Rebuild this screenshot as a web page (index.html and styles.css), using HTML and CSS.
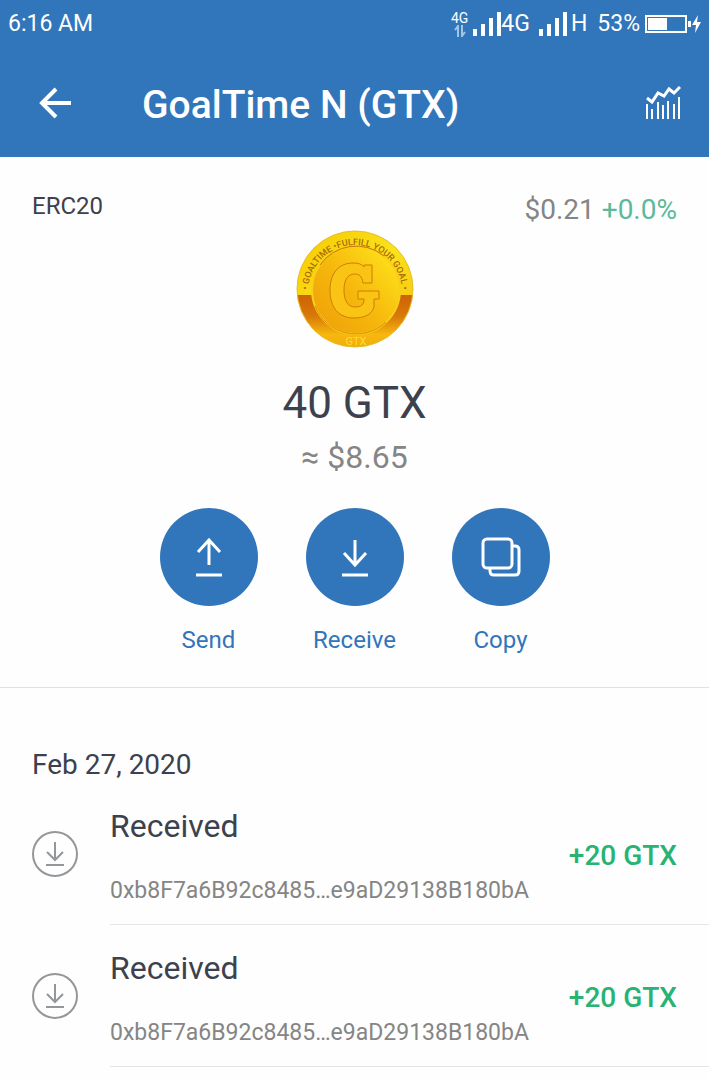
FILE: index.html
```html
<!DOCTYPE html>
<html lang="en">
<head>
    <meta charset="UTF-8">
    <meta name="viewport" content="width=device-width, initial-scale=1.0">
    <title>GoalTime N (GTX)</title>
    <link rel="stylesheet" href="styles.css">
</head>
<body>
    <header class="header">
        <div class="status-bar">
            <span>6:16 AM</span>
            <div class="status-icons">
                <div class="data">
                    <span class="data-label">4G</span>
                    <svg width="12" height="12" viewBox="0 0 12 12" fill="none" stroke="#a3c4e6" stroke-width="2">
                        <path d="M4 12V1L1 5M8 0v11l3-4"/>
                    </svg>
                </div>
                <svg width="29" height="24" viewBox="0 0 29 24" fill="#fff">
                    <path d="M1 17h4v7H1zM9 12h4v12H9zM17 6h4v18h-4zM25 0h4v24h-4z"/>
                </svg>
                <span>4G</span>
                <svg class="signal-two" width="29" height="24" viewBox="0 0 29 24" fill="#fff">
                    <path d="M1 17h4v7H1zM9 12h4v12H9zM17 6h4v18h-4zM25 0h4v24h-4z"/>
                </svg>
                <span class="network">H</span>
                <span class="percent">53%</span>
                <svg width="56" height="20" viewBox="0 0 56 20" fill="#fff">
                    <path d="M0 1h42v18H0zM2 3v14h38V3z" fill-rule="evenodd"/>
                    <path d="M3 4h19v12H3zM43 7h3v6h-3zM53 1l-6 10h4l-1 8 6-11h-4z"/>
                </svg>
            </div>
        </div>
        <nav class="nav-bar">
            <button class="icon-button" aria-label="Back">
                <svg width="34" height="32" viewBox="0 0 34 32" fill="none" stroke="#fff" stroke-width="4">
                    <path d="M33 16H4M18 2L4 16l14 14"/>
                </svg>
            </button>
            <h1>GoalTime N (GTX)</h1>
            <button class="icon-button" aria-label="Price chart">
                <svg width="36" height="34" viewBox="0 0 36 34" fill="none" stroke="#fff" stroke-width="3">
                    <path d="M2 12l5 4 6-9 6 3 5-7 5 4 6-6"/>
                    <path d="M2 18v15M7 23v10M13 16v17M18 19v14M23 15v18M29 18v15M34 11v22" stroke-width="2"/>
                </svg>
            </button>
        </nav>
    </header>

    <main>
        <section class="summary">
            <div class="token-info">
                <span class="token-type">ERC20</span>
                <span class="price">$0.21 <span class="change">+0.0%</span></span>
            </div>
            <svg class="coin" width="118" height="118" viewBox="0 0 118 118">
                <defs>
                    <linearGradient id="rim" x1="0" y1="0" x2="1" y2="1">
                        <stop offset="0" stop-color="#f5c800"/>
                        <stop offset="0.5" stop-color="#fbe21c"/>
                        <stop offset="1" stop-color="#f4bd08"/>
                    </linearGradient>
                    <linearGradient id="face" x1="0" y1="1" x2="1" y2="0.1">
                        <stop offset="0" stop-color="#ee9c08"/>
                        <stop offset="0.5" stop-color="#f6b80c"/>
                        <stop offset="1" stop-color="#ffe51c"/>
                    </linearGradient>
                    <linearGradient id="band" x1="0" y1="0" x2="0" y2="1">
                        <stop offset="0" stop-color="#cc6204"/>
                        <stop offset="0.4" stop-color="#d97908"/>
                        <stop offset="0.75" stop-color="#f7b80e"/>
                        <stop offset="1" stop-color="#f0ac0a"/>
                    </linearGradient>
                    <clipPath id="disc">
                        <circle cx="59" cy="59" r="58"/>
                    </clipPath>
                    <path id="arc" d="M12 62A47 47 0 1 1 106 62"/>
                </defs>
                <circle cx="59" cy="59" r="58" fill="url(#rim)"/>
                <rect y="65" width="118" height="53" fill="url(#band)" clip-path="url(#disc)"/>
                <circle cx="59" cy="59" r="58" fill="none" stroke="#e8bc2c"/>
                <circle cx="60" cy="60" r="44" fill="url(#face)" stroke="#f8cf1a" stroke-width="2"/>
                <path d="M24 35A44 44 0 0 1 88 26" fill="none" stroke="#c87806"/>
                <path d="M19 76A44 44 0 0 0 90 92" fill="none" stroke="#de8a08"/>
                <path d="M68 37V35H76V53H67C66 46 63 44 59 44C51 44 48 51 48 60C48 71 52 77 59 77C65 77 68 75 68 69H62V61H83V69H78V77C76 84 69 88 58 88C43 88 34 78 34 60C34 43 43 33 57 33C62 33 66 34 68 37Z" fill="#fac414" stroke="#cf7d06"/>
                <text class="coin-text"><textPath href="#arc" startOffset="50%" text-anchor="middle">• GOALTIME •FULFILL YOUR GOAL •</textPath></text>
                <text class="coin-symbol" x="60" y="115" text-anchor="middle">GTX</text>
            </svg>
            <h2 class="balance">40 GTX</h2>
            <p class="fiat">≈ $8.65</p>
            <div class="actions">
                <button class="action">
                    <span class="action-circle">
                        <svg width="40" height="40" viewBox="0 0 40 40" fill="none" stroke="#fff" stroke-width="3">
                            <path d="M20 28V3M9 15L20 3l11 12M7 38h26"/>
                        </svg>
                    </span>
                    Send
                </button>
                <button class="action">
                    <span class="action-circle">
                        <svg width="40" height="40" viewBox="0 0 40 40" fill="none" stroke="#fff" stroke-width="3">
                            <path d="M20 3v25M9 16l11 12 11-12M7 38h26"/>
                        </svg>
                    </span>
                    Receive
                </button>
                <button class="action">
                    <span class="action-circle">
                        <svg width="40" height="40" viewBox="0 0 40 40" fill="none" stroke="#fff" stroke-width="3">
                            <rect x="2" y="2" width="29" height="29" rx="4"/>
                            <path d="M31 9h3q4 0 4 4v21q0 4-4 4H13q-4 0-4-4v-3"/>
                        </svg>
                    </span>
                    Copy
                </button>
            </div>
        </section>

        <section class="history">
            <h3 class="date">Feb 27, 2020</h3>
            <div class="transaction">
                <svg width="46" height="46" viewBox="0 0 46 46" fill="none" stroke="#93979a" stroke-width="2">
                    <circle cx="23" cy="23" r="22"/>
                    <path d="M23 11v18M15 21l8 8 8-8M14 34h18"/>
                </svg>
                <div class="transaction-body">
                    <div>
                        <p class="transaction-title">Received</p>
                        <p class="address">0xb8F7a6B92c8485…e9aD29138B180bA</p>
                    </div>
                    <span class="amount">+20 GTX</span>
                </div>
            </div>
            <div class="transaction">
                <svg width="46" height="46" viewBox="0 0 46 46" fill="none" stroke="#93979a" stroke-width="2">
                    <circle cx="23" cy="23" r="22"/>
                    <path d="M23 11v18M15 21l8 8 8-8M14 34h18"/>
                </svg>
                <div class="transaction-body">
                    <div>
                        <p class="transaction-title">Received</p>
                        <p class="address">0xb8F7a6B92c8485…e9aD29138B180bA</p>
                    </div>
                    <span class="amount">+20 GTX</span>
                </div>
            </div>
        </section>
    </main>
</body>
</html>
```
FILE: styles.css
```css
* {
    box-sizing: border-box;
}
body {
    margin: 0;
    font-family: Roboto, sans-serif;
    font-size: 24px;
    line-height: 32px;
    color: #3c414d;
    background: #fefefe;
}
h1, h2, h3, p {
    margin: 0;
    font-weight: 400;
}
button {
    padding: 0;
    border: none;
    background: none;
    font: inherit;
    color: inherit;
    cursor: pointer;
}
svg {
    display: block;
    flex-shrink: 0;
}

/* Header */
.header {
    background: #3175bb;
    color: #fff;
    padding-bottom: 23px;
}
.status-bar {
    display: flex;
    justify-content: space-between;
    align-items: center;
    height: 48px;
    padding: 0 8px;
    font-size: 23px;
}
.status-icons {
    display: flex;
    align-items: center;
}
.data {
    display: flex;
    flex-direction: column;
    align-items: center;
    margin-right: 4px;
}
.data-label {
    font-size: 14px;
    line-height: 14px;
}
.signal-two {
    margin-left: 8px;
}
.network {
    margin-left: 4px;
}
.percent {
    margin: 0 5px 0 10px;
}
.nav-bar {
    display: flex;
    align-items: center;
    padding: 28px 28px 0 38px;
}
.nav-bar h1 {
    flex: 1;
    margin-left: 70px;
    font-size: 39px;
    line-height: 58px;
    font-weight: 500;
}
.icon-button {
    padding-bottom: 4px;
}

/* Token summary */
.summary {
    display: flex;
    flex-direction: column;
    align-items: center;
    padding: 33px 32px 31px;
    border-bottom: 1px solid #e0e1e2;
}
.token-info {
    display: flex;
    justify-content: space-between;
    width: 100%;
    height: 40px;
}
.price {
    font-size: 28px;
    line-height: 40px;
    color: #858585;
}
.change {
    color: #5cb99b;
}
.coin-text {
    font-size: 9px;
    font-weight: 500;
    fill: #a86a08;
}
.coin-symbol {
    font-size: 11px;
    fill: #ffdc3c;
}
.balance {
    margin-top: 27px;
    font-size: 44px;
    line-height: 56px;
}
.fiat {
    margin-top: 4px;
    font-size: 32px;
    line-height: 44px;
    color: #858585;
}
.actions {
    display: flex;
    gap: 48px;
    margin-top: 29px;
}
.action {
    display: flex;
    flex-direction: column;
    align-items: center;
    gap: 18px;
    width: 98px;
    color: #3175bb;
}
.action-circle {
    display: flex;
    align-items: center;
    justify-content: center;
    width: 98px;
    height: 98px;
    border-radius: 50%;
    background: #3175bb;
}

/* Transactions */
.history {
    padding-left: 32px;
}
.date {
    padding-top: 59px;
    font-size: 28px;
    line-height: 36px;
}
.transaction {
    display: flex;
    align-items: center;
    gap: 32px;
}
.transaction-body {
    flex: 1;
    display: flex;
    align-items: center;
    justify-content: space-between;
    padding: 21px 32px 17px 0;
    border-bottom: 1px solid #e4e5e6;
}
.transaction-title {
    margin-bottom: 27px;
    font-size: 32px;
    line-height: 44px;
}
.address {
    font-size: 23px;
    color: #858585;
}
.amount {
    font-size: 28px;
    font-weight: 500;
    color: #26b374;
}
```
